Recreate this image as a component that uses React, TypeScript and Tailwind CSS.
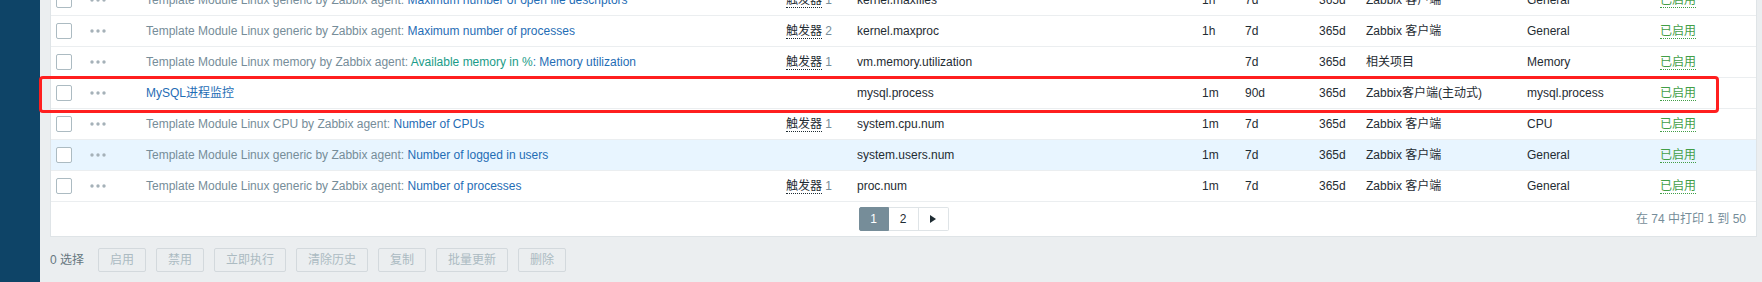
import React from "react";

const font = { fontFamily: '"Liberation Sans", Arial, "Noto Sans CJK SC", sans-serif' };

type Row = {
  tpl?: string;
  master?: string;
  name: string;
  triggers?: number;
  key: string;
  interval: string;
  history: string;
  trends: string;
  type: string;
  app: string;
  hover?: boolean;
};

const rows: Row[] = [
  { tpl: "Template Module Linux generic by Zabbix agent", name: "Maximum number of open file descriptors", triggers: 1, key: "kernel.maxfiles", interval: "1h", history: "7d", trends: "365d", type: "Zabbix 客户端", app: "General" },
  { tpl: "Template Module Linux generic by Zabbix agent", name: "Maximum number of processes", triggers: 2, key: "kernel.maxproc", interval: "1h", history: "7d", trends: "365d", type: "Zabbix 客户端", app: "General" },
  { tpl: "Template Module Linux memory by Zabbix agent", master: "Available memory in %", name: "Memory utilization", triggers: 1, key: "vm.memory.utilization", interval: "", history: "7d", trends: "365d", type: "相关项目", app: "Memory" },
  { name: "MySQL进程监控", key: "mysql.process", interval: "1m", history: "90d", trends: "365d", type: "Zabbix客户端(主动式)", app: "mysql.process" },
  { tpl: "Template Module Linux CPU by Zabbix agent", name: "Number of CPUs", triggers: 1, key: "system.cpu.num", interval: "1m", history: "7d", trends: "365d", type: "Zabbix 客户端", app: "CPU" },
  { tpl: "Template Module Linux generic by Zabbix agent", name: "Number of logged in users", key: "system.users.num", interval: "1m", history: "7d", trends: "365d", type: "Zabbix 客户端", app: "General", hover: true },
  { tpl: "Template Module Linux generic by Zabbix agent", name: "Number of processes", triggers: 1, key: "proc.num", interval: "1m", history: "7d", trends: "365d", type: "Zabbix 客户端", app: "General" },
];

const actions = ["启用", "禁用", "立即执行", "清除历史", "复制", "批量更新", "删除"];

function Dots() {
  return (
    <svg width="16" height="4" viewBox="0 0 16 4">
      <circle cx="2" cy="2" r="1.7" fill="#a5b1b8" />
      <circle cx="8" cy="2" r="1.7" fill="#a5b1b8" />
      <circle cx="14" cy="2" r="1.7" fill="#a5b1b8" />
    </svg>
  );
}

function ItemRow({ row }: { row: Row }) {
  return (
    <div
      className={
        "grid grid-cols-[34px_56px_640px_71px_345px_43px_74px_47px_161px_133px_1fr] items-center h-[31px] border-b border-[#ebeef0] text-[#1f2c33] " +
        (row.hover ? "bg-[#e8f5ff]" : "bg-white")
      }
    >
      <div className="pl-[5px] flex">
        <span className="w-[16px] h-[16px] border border-[#acbbc2] rounded-[2px] bg-white" />
      </div>
      <div className="pl-[5px] flex items-center">
        <Dots />
      </div>
      <div className="pl-[5px] whitespace-nowrap overflow-hidden">
        {row.tpl && (
          <>
            <span className="text-[#768d99] border-b border-[#c3ccd1]">{row.tpl}</span>
            <span className="text-[#768d99]">: </span>
          </>
        )}
        {row.master && (
          <>
            <span className="text-[#1a9c88] border-b border-[#c3ccd1]">{row.master}</span>
            <span className="text-[#1f6db5]">: </span>
          </>
        )}
        <span className="text-[#1f6db5]">{row.name}</span>
      </div>
      <div className="pl-[5px] whitespace-nowrap">
        {row.triggers !== undefined && (
          <>
            <span className="border-b border-dotted border-[#1f2c33]">触发器</span>
            <span className="text-[#768d99]"> {row.triggers}</span>
          </>
        )}
      </div>
      <div className="pl-[5px] whitespace-nowrap">{row.key}</div>
      <div className="pl-[5px]">{row.interval}</div>
      <div className="pl-[5px]">{row.history}</div>
      <div className="pl-[5px]">{row.trends}</div>
      <div className="pl-[5px] whitespace-nowrap">{row.type}</div>
      <div className="pl-[5px] whitespace-nowrap">{row.app}</div>
      <div className="pl-[5px]">
        <span className="text-[#429e47] border-b border-dotted border-[#429e47]">已启用</span>
      </div>
    </div>
  );
}

export default function App() {
  return (
    <div className="relative flex h-[282px] overflow-hidden bg-[#ebeef0] text-[12px] leading-[14px]" style={font}>
      <div className="w-[40px] shrink-0 bg-[#0e4467]" />
      <div className="flex-1 pl-[10px] pr-[5px]">
        <div className="-mt-[15px] bg-white border-x border-b border-[#dfe4e7]">
          {rows.map((r, i) => (
            <ItemRow key={i} row={r} />
          ))}
          <div className="grid grid-cols-[1fr_auto_1fr] items-center h-[34px]">
            <div />
            <div className="flex">
              <span className="w-[30px] h-[24px] flex items-center justify-center bg-[#768d99] border border-[#768d99] text-white rounded-l-[2px]">1</span>
              <span className="w-[30px] h-[24px] flex items-center justify-center border-y border-r border-[#dfe4e7] text-[#1f2c33]">2</span>
              <span className="w-[30px] h-[24px] flex items-center justify-center border-y border-r border-[#dfe4e7] rounded-r-[2px]">
                <svg width="6" height="8" viewBox="0 0 6 8">
                  <polygon points="0,0 6,4 0,8" fill="#1f2c33" />
                </svg>
              </span>
            </div>
            <div className="text-right pr-[10px] text-[#768d99] whitespace-nowrap">在 74 中打印 1 到 50</div>
          </div>
        </div>
        <div className="flex items-center mt-[11px]">
          <span className="text-[#66777f] mr-[14px]">0 选择</span>
          <div className="flex gap-[10px]">
            {actions.map((a) => (
              <span
                key={a}
                className="h-[24px] px-[11px] flex items-center border border-[#d3d9dd] rounded-[2px] bg-[#ebeef0] text-[#acbbc2]"
              >
                {a}
              </span>
            ))}
          </div>
        </div>
      </div>
      <div className="absolute left-[39px] top-[76px] w-[1680px] h-[37px] border-[3px] border-[#ff1f1f] rounded-[4px] pointer-events-none" />
    </div>
  );
}
